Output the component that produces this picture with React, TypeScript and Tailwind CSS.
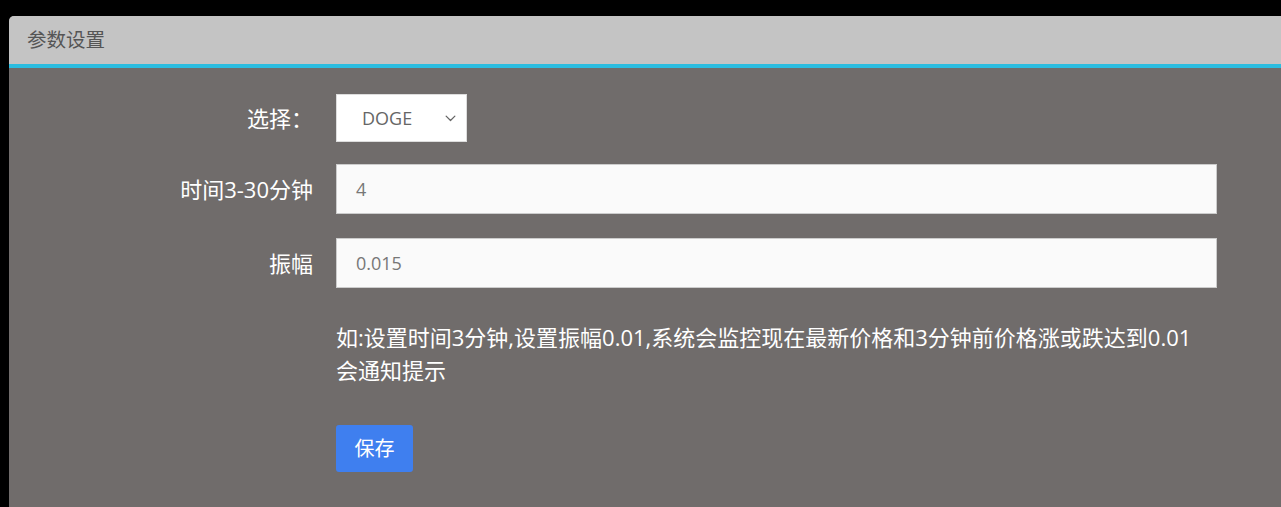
export default function App() {
  const font = { fontFamily: '"Open Sans", "Noto Sans CJK SC", sans-serif' };
  return (
    <div className="min-h-[507px] bg-black pt-[16px] pl-[9px]" style={font}>
      <div className="rounded-tl-[5px] overflow-hidden h-[491px] bg-[#706c6b]">
        {/* Header */}
        <div className="h-[48px] bg-[#c4c4c4] border-b-[4px] border-[#2bbde0] flex items-center pl-[18px] box-content">
          <span className="text-[19.5px] text-[#555]">参数设置</span>
        </div>

        {/* Form */}
        <div className="pt-[26px] pr-[64px]">
          <div className="flex items-center h-[48px]">
            <label className="w-[304px] text-right text-[22px] text-white">选择：</label>
            <div className="ml-[23px] relative w-[131px] h-[48px] bg-white border border-[#ddd] flex items-center pl-[25px]">
              <span className="text-[18px] text-[#666]">DOGE</span>
              <svg
                className="absolute right-[8px] top-1/2 -translate-y-1/2"
                width="15"
                height="15"
                viewBox="0 0 24 24"
                fill="none"
                stroke="#666"
                strokeWidth="2"
                strokeLinecap="round"
                strokeLinejoin="round"
              >
                <path d="M5 9l7 7 7-7" />
              </svg>
            </div>
          </div>

          <div className="flex items-center h-[50px] mt-[22px]">
            <label className="w-[304px] text-right text-[22px] text-white">时间3-30分钟</label>
            <div className="ml-[23px] flex-1 h-[50px] bg-[#fafafa] border border-[#ccc] flex items-center pl-[19px]">
              <span className="text-[18px] text-[#777]">4</span>
            </div>
          </div>

          <div className="flex items-center h-[50px] mt-[24px]">
            <label className="w-[304px] text-right text-[22px] text-white">振幅</label>
            <div className="ml-[23px] flex-1 h-[50px] bg-[#fafafa] border border-[#ccc] flex items-center pl-[19px]">
              <span className="text-[18px] text-[#777]">0.015</span>
            </div>
          </div>

          <div className="ml-[327px] mt-[33px] text-[22px] leading-[33px] text-white">
            如:设置时间3分钟,设置振幅0.01,系统会监控现在最新价格和3分钟前价格涨或跌达到0.01
            <br />
            会通知提示
          </div>

          <button className="ml-[327px] mt-[38px] w-[77px] h-[47px] rounded-[3px] bg-[#3f7fef] text-white text-[20px]">
            保存
          </button>
        </div>
      </div>
    </div>
  );
}
